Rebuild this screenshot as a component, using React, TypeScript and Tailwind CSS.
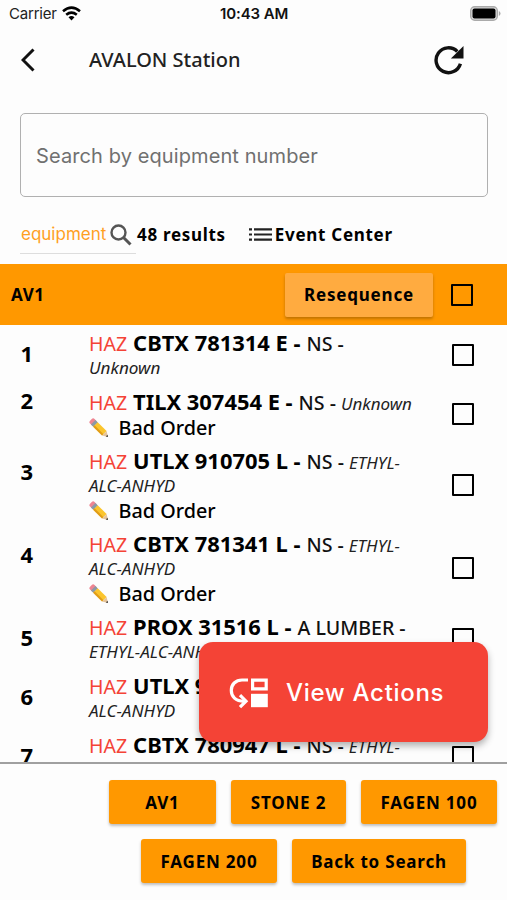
import type { ReactNode } from 'react';

interface Car {
    position: number;
    name: string;
    owner: string;
    commodity: string[];
    badOrder?: boolean;
}

const CARS: Car[] = [
    { position: 1, name: 'CBTX 781314 E -', owner: 'NS -', commodity: ['', 'Unknown'] },
    { position: 2, name: 'TILX 307454 E -', owner: 'NS -', commodity: ['Unknown'], badOrder: true },
    { position: 3, name: 'UTLX 910705 L -', owner: 'NS -', commodity: ['ETHYL-', 'ALC-ANHYD'], badOrder: true },
    { position: 4, name: 'CBTX 781341 L -', owner: 'NS -', commodity: ['ETHYL-', 'ALC-ANHYD'], badOrder: true },
    { position: 5, name: 'PROX 31516 L -', owner: 'A LUMBER -', commodity: ['', 'ETHYL-ALC-ANHYD'] },
    { position: 6, name: 'UTLX 910688 L -', owner: 'NS -', commodity: ['ETHYL-', 'ALC-ANHYD'] },
    { position: 7, name: 'CBTX 780947 L -', owner: 'NS -', commodity: ['ETHYL-', 'ALC-ANHYD'] },
];

const PencilIcon = () => (
    <svg width="20" height="20" viewBox="0 0 20 20" className="shrink-0">
        <g transform="translate(1.2 1.2) rotate(45)">
            <rect x="1" y="-3.2" width="6" height="6.4" rx="2" fill="#ee8592" />
            <rect x="4.2" y="-3.2" width="3.6" height="6.4" fill="#8b99a6" />
            <rect x="7.4" y="-3.2" width="12.6" height="6.4" fill="#fbc52d" />
            <rect x="7.4" y="1.2" width="12.6" height="2" fill="#e09c18" />
            <path d="M20-3.200 25.200 0 20 3.200Z" fill="#e6c49a" />
            <path d="m23.300-1.200 1.900 1.200-1.900 1.200Z" fill="#333" />
        </g>
    </svg>
);

const Checkbox = () => (
    <span className="block size-[22px] rounded-[1px] border-2 border-black" />
);

const CarRow = ({ car }: { car: Car }) => (
    <div className="flex pt-[5px] pb-[6px] shrink-0">
        <div className="flex-1 min-w-0">
            <div className="flex items-center">
                <span className="w-[89px] pl-[20.5px] pb-[3px] text-[22px] leading-[21px] font-bold">{car.position}</span>
                <div className="whitespace-nowrap">
                    <div className="h-6 flex items-baseline gap-[6px] leading-6">
                        <span className="text-[19.5px] text-[#f44336]">HAZ</span>
                        <span className="text-[21.9px] font-bold">{car.name}</span>
                        <span className="text-[19.6px] font-medium text-[#111]">{car.owner}</span>
                        <span className="-ml-px text-[17px] italic text-[#222]">{car.commodity[0]}</span>
                    </div>
                    {car.commodity[1] && (
                        <div className="h-6 text-[17.1px] leading-[25px] italic text-[#222]">{car.commodity[1]}</div>
                    )}
                </div>
            </div>
            {car.badOrder && (
                <div className="flex items-center h-6 pt-[3px] pl-[89px] gap-[9.5px]">
                    <PencilIcon />
                    <span className="text-[19.8px] leading-6 font-medium">Bad Order</span>
                </div>
            )}
        </div>
        <div className="flex items-center pr-[33px] pb-px">
            <Checkbox />
        </div>
    </div>
);

const TrackButton = ({ children, className }: { children: ReactNode; className: string }) => (
    <button
        className={`h-[44px] pt-[2px] rounded-[3px] bg-[#ff9800] text-[17px] font-bold tracking-[0.8px] whitespace-nowrap shadow-[0_2px_3px_rgba(0,0,0,0.25)] ${className}`}
    >
        {children}
    </button>
);

export default function App() {
    return (
        <div className="relative flex flex-col w-[507px] h-[900px] overflow-hidden bg-[#fdfdfd] text-black font-['Noto_Sans',sans-serif]">
            {/* status bar */}
            <div className="flex items-center h-7 shrink-0 font-['Inter',sans-serif] text-[15px]">
                <div className="flex items-center gap-[5px] w-[220px] pl-[9px] text-[#222]">
                    <span className="tracking-[-0.2px]">Carrier</span>
                    <svg width="19" height="15" viewBox="0 0 19 15" fill="none" stroke="#000" strokeWidth="2.6" className="mb-[2px]">
                        <path d="M1 5.2Q9.500-1.800 18 5.200" />
                        <path d="M4.200 8.700Q9.500 4.400 14.800 8.700" />
                        <path d="m6.500 11.200 3 3.300 3-3.300Q9.500 8.800 6.500 11.200Z" fill="#000" stroke="none" />
                    </svg>
                </div>
                <span className="font-semibold tracking-[-0.1px] text-[#111]">10:43 AM</span>
                <svg width="31" height="15" viewBox="0 0 31 15" className="ml-auto mr-[6px] mb-[2px]">
                    <rect x=".7" y=".7" width="26.600" height="13.600" rx="4" fill="#ddd" stroke="#aaa" strokeWidth="1.400" />
                    <rect x="2.500" y="2.500" width="23" height="10" rx="2" />
                    <path d="M28.800 5v5q1.700-.8 1.700-2.500T28.800 5Z" fill="#aaa" />
                </svg>
            </div>

            {/* header */}
            <div className="flex items-center h-[64px] shrink-0">
                <svg width="14" height="24" viewBox="0 0 14 24" className="ml-[21px]" fill="none" stroke="#111" strokeWidth="3">
                    <path d="M12.500 1.500 2 12l10.500 10.500" />
                </svg>
                <h1 className="ml-[54px] text-[20px] font-medium text-[#222]">AVALON Station</h1>
                <svg width="30" height="30" viewBox="0 0 30 30" className="ml-auto mr-[43px]" fill="none">
                    <path d="M23.300 6.500A12.400 12.400 0 1 0 26.400 18.700" stroke="#111" strokeWidth="3.400" />
                    <path d="M29.500 1v12.600H16.900Z" fill="#111" />
                </svg>
            </div>

            {/* search */}
            <div className="mt-[21px] ml-5 mr-[19px] h-[84px] mb-px shrink-0 rounded-[5px] border border-[#b0b0b0] flex items-center pt-px pl-[15px] font-['Inter',sans-serif] text-[20px] tracking-[0.1px] text-[#707070]">
                Search by equipment number
            </div>

            <div className="flex items-center h-[66px] shrink-0 pt-2 pl-5">
                <div className="flex items-center gap-1 w-[116px] h-[38px] pl-px border-b border-[#ddd] font-['Inter',sans-serif] text-[17px] text-[#ffa01f]">
                    <span>equipment</span>
                    <svg width="22" height="22" viewBox="0 0 22 22" fill="none" stroke="#555" strokeWidth="2.400">
                        <circle cx="8.500" cy="8.500" r="7" />
                        <path d="m13.500 13.500 7 7" strokeWidth="3" />
                    </svg>
                </div>
                <span className="ml-[1px] text-[17px] font-bold tracking-[0.7px]">48 results</span>
                <svg width="23" height="13" viewBox="0 0 23 13" className="ml-[23px] mb-[2px]" stroke="#222" strokeWidth="2.200">
                    <path d="M0 1.300h3M5 1.300h18M0 6.500h3M5 6.500h18M0 11.700h3M5 11.700h18" />
                </svg>
                <span className="ml-[3px] text-[17px] font-bold tracking-[0.7px]">Event Center</span>
            </div>

            {/* track bar */}
            <div className="flex items-center h-[61px] shrink-0 bg-[#ff9800] pl-[11px] pr-[34px]">
                <span className="text-[17px] font-bold tracking-[0.6px]">AV1</span>
                <button className="ml-auto mr-[18px] w-[148px] h-[44px] rounded-[2px] bg-[#ffab40] text-[17px] font-bold tracking-[0.8px] shadow-[0_2px_3px_rgba(0,0,0,0.25)]">
                    Resequence
                </button>
                <Checkbox />
            </div>

            <div className="flex-1 min-h-0 pt-px overflow-hidden">
                {CARS.map((car) => (
                    <CarRow key={car.position} car={car} />
                ))}
            </div>

            <div className="h-[138px] shrink-0 border-t-2 border-[#a0a0a0] pt-[16px]">
                <div className="flex justify-end gap-[15px] pr-[10px]">
                    <TrackButton className="w-[107px]">AV1</TrackButton>
                    <TrackButton className="w-[115px]">STONE 2</TrackButton>
                    <TrackButton className="w-[136px]">FAGEN 100</TrackButton>
                </div>
                <div className="flex gap-[15px] mt-[15px] pl-[141px]">
                    <TrackButton className="w-[136px]">FAGEN 200</TrackButton>
                    <TrackButton className="w-[174px]">Back to Search</TrackButton>
                </div>
            </div>

            <button className="absolute left-[199px] top-[642px] w-[289px] h-[100px] rounded-[14px] bg-[#f44336] flex items-center pt-[2px] pl-[30px] gap-[17px] text-white shadow-[0_4px_7px_rgba(0,0,0,0.3)]">
                <svg width="40" height="32" viewBox="0 0 40 32" fill="none" stroke="#fff" strokeWidth="3.200">
                    <path d="M19 3H13C6.500 3 2.300 7.500 2.300 13.500S6.500 24.300 15 24.300" />
                    <path d="m11 18.200 6 6-6 6" />
                    <path d="M23.600 3.200h13.600v8.600H23.600Z" />
                    <path d="M22 16.800H38.800v13.400H22Z" fill="#fff" stroke="none" />
                </svg>
                <span className="font-['Inter',sans-serif] text-[24px] font-medium tracking-[0.7px]">View Actions</span>
            </button>
        </div>
    );
}
